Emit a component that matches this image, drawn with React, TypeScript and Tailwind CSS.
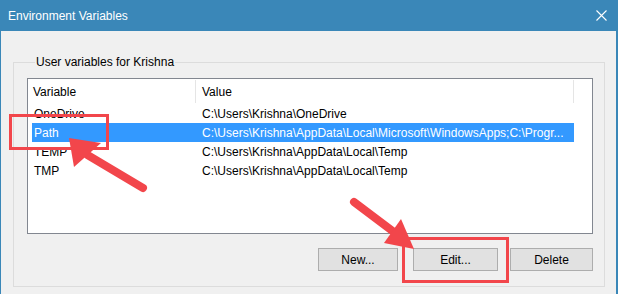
import React from 'react';

const ROWS = [
  { name: 'OneDrive', value: 'C:\\Users\\Krishna\\OneDrive' },
  { name: 'Path', value: 'C:\\Users\\Krishna\\AppData\\Local\\Microsoft\\WindowsApps;C:\\Progr...' },
  { name: 'TEMP', value: 'C:\\Users\\Krishna\\AppData\\Local\\Temp' },
  { name: 'TMP', value: 'C:\\Users\\Krishna\\AppData\\Local\\Temp' },
];

const SELECTED = 'Path';

function Arrow({ tail, tip, left, right }: { tail: [number, number]; tip: [number, number]; left: [number, number]; right: [number, number] }) {
  const base: [number, number] = [(left[0] + right[0]) / 2, (left[1] + right[1]) / 2];
  return (
    <g>
      <line x1={tail[0]} y1={tail[1]} x2={base[0]} y2={base[1]} stroke="#f2464b" strokeWidth={8} strokeLinecap="round" />
      <polygon points={`${tip[0]},${tip[1]} ${left[0]},${left[1]} ${right[0]},${right[1]}`} fill="#f2464b" />
    </g>
  );
}

export default function App() {
  return (
    <div
      className="relative w-[618px] h-[294px] bg-[#f0f0f0] border-l border-r-2 border-[#3a87b8] text-[12px] text-black overflow-hidden"
      style={{ fontFamily: '"Liberation Sans", Arial, sans-serif' }}
    >
      <div className="h-[31px] bg-[#3a87b8] flex items-center justify-between pl-[7px] pr-[9px] text-white">
        <span className="text-[12px]">Environment Variables</span>
        <svg width="11" height="11" viewBox="0 0 11 11">
          <path d="M0.5 0.5 L10.5 10.5 M10.5 0.5 L0.5 10.5" stroke="white" strokeWidth="1.1" />
        </svg>
      </div>

      <fieldset className="ml-[12px] mt-[23px] w-[592px] border border-[#dcdcdc] pl-[13px] pr-[11px] pb-[15px]">
        <legend className="ml-[8px] px-[1px] leading-[16px]">User variables for Krishna</legend>

        <div className="mt-[8px] h-[156px] border border-[#828790] bg-white pl-[4px]">
          <div className="flex h-[25px] items-center">
            <div className="w-[163px] pl-[1px]">Variable</div>
            <div className="w-px h-[23px] bg-[#e5e5e5]" />
            <div className="w-[377px] pl-[6px]">Value</div>
            <div className="w-px h-[23px] bg-[#e5e5e5]" />
          </div>
          {ROWS.map(r => {
            const sel = r.name === SELECTED;
            return (
              <div
                key={r.name}
                className={`flex h-[19px] w-[542px] items-center whitespace-nowrap ${sel ? 'bg-[#3399ff] text-white' : ''}`}
              >
                <div className="w-[164px] pl-[2px] overflow-hidden">{r.name}</div>
                <div className="w-[378px] pl-[6px] overflow-hidden">{r.value}</div>
              </div>
            );
          })}
        </div>

        <div className="mt-[14px] flex justify-end">
          <button className="w-[80px] h-[23px] bg-[#e1e1e1] border border-[#adadad]">New...</button>
          <button className="ml-[15px] w-[85px] h-[23px] bg-[#e1e1e1] border border-[#adadad]">Edit...</button>
          <button className="ml-[12px] w-[83px] h-[23px] bg-[#e1e1e1] border border-[#adadad]">Delete</button>
        </div>
      </fieldset>

      {/* annotation overlay */}
      <svg className="absolute left-0 top-0 pointer-events-none" width="618" height="294" viewBox="0 0 618 294">
        <rect x="9.5" y="115.5" width="97" height="33" fill="none" stroke="#f2464b" strokeWidth="3" />
        <rect x="402.5" y="238.5" width="104" height="43" fill="none" stroke="#f2464b" strokeWidth="3" />
        <Arrow tail={[142, 188]} tip={[68, 138]} left={[73, 167]} right={[100, 143]} />
        <Arrow tail={[353, 202]} tip={[413, 249]} left={[383, 243]} right={[400, 219]} />
      </svg>
    </div>
  );
}
